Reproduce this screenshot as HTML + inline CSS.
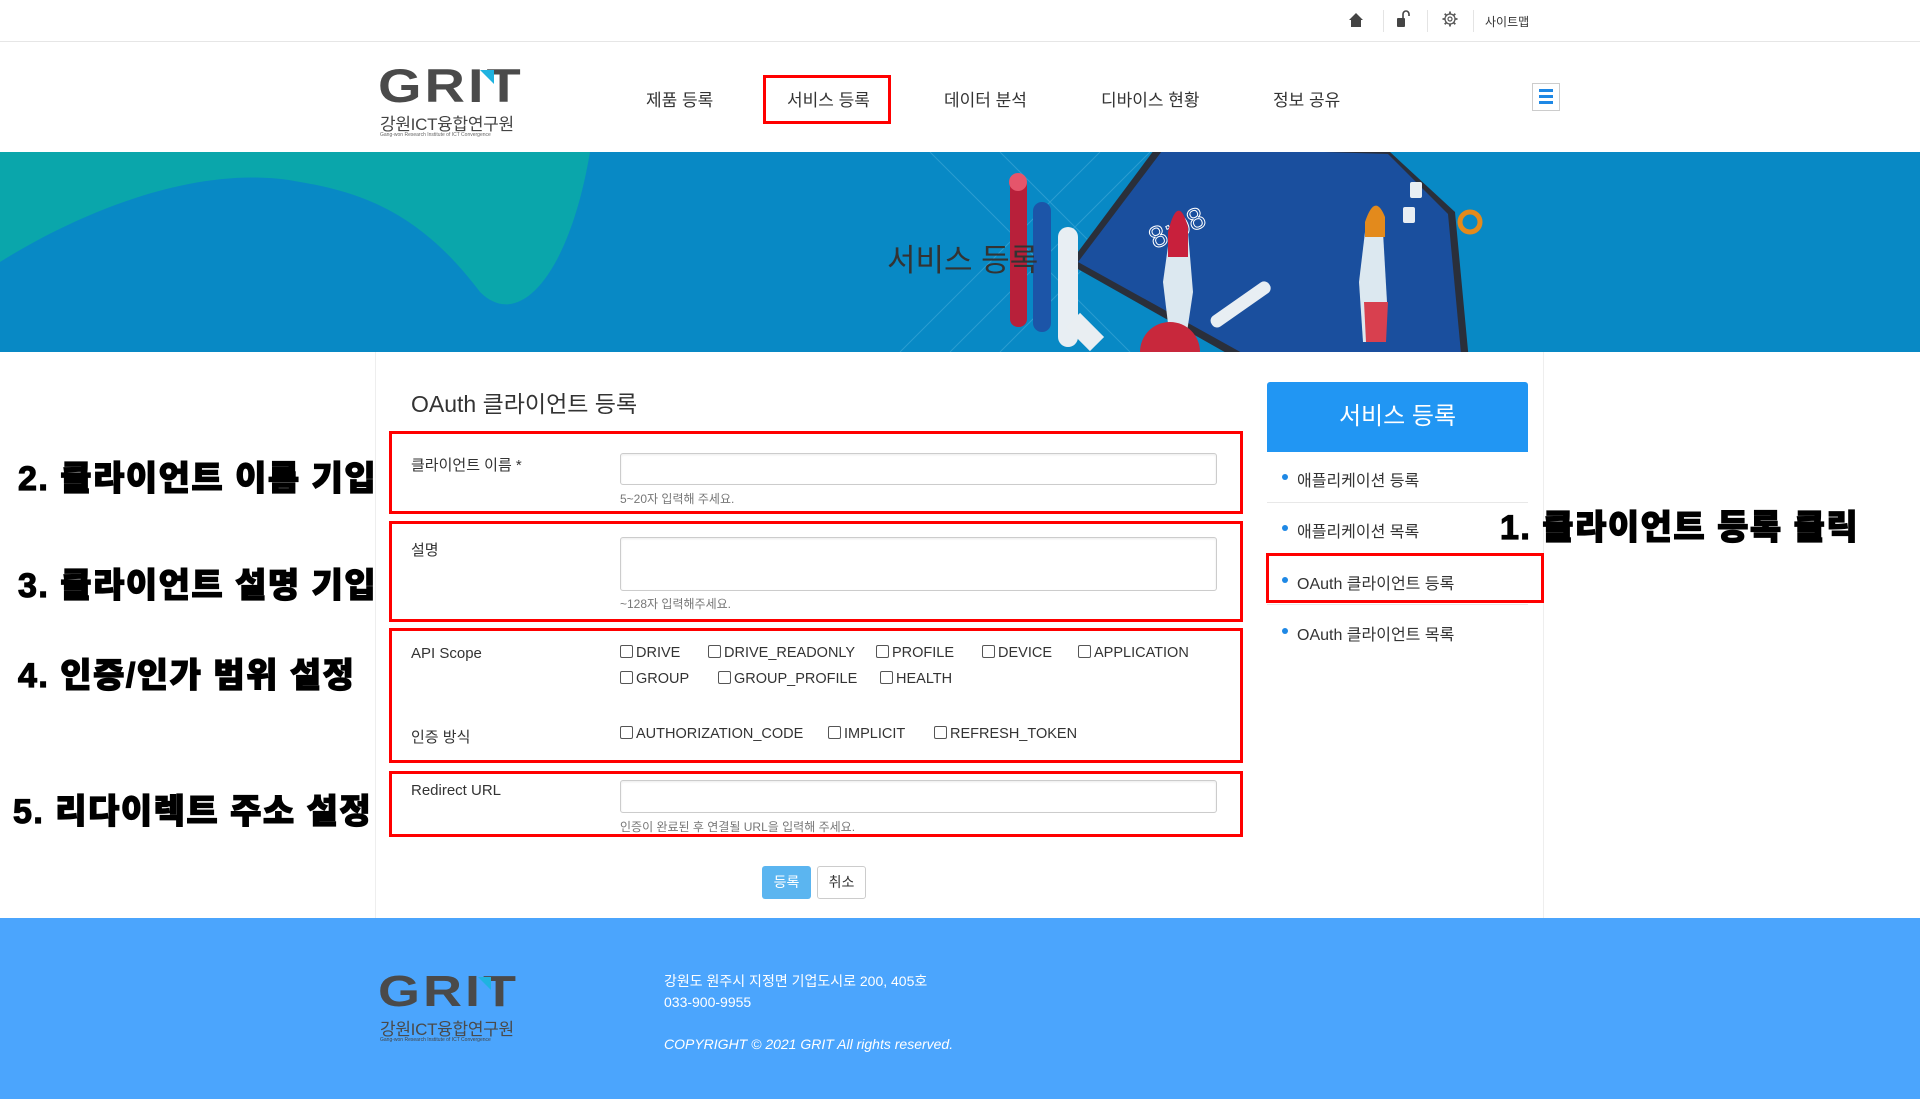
<!DOCTYPE html>
<html><head><meta charset="utf-8">
<style>
*{margin:0;padding:0;box-sizing:border-box}
body{width:1920px;height:1099px;overflow:hidden;background:#fff;font-family:"Liberation Sans","Noto Sans CJK KR",sans-serif;color:#333;position:relative}
.a{position:absolute}
.topbar{left:0;top:0;width:1920px;height:42px;border-bottom:1px solid #e6e6e6}
.nav{font-size:17px;color:#333;top:86px}
.lbl{font-size:15px;color:#333;left:411px}
.inp{left:620px;width:597px;border:1px solid #ccc;border-radius:3px;background:#fff;box-shadow:inset 0 1px 2px rgba(0,0,0,.08)}
.hint{font-size:12px;color:#777;left:620px}
.cb{font-size:14.5px;color:#333;white-space:nowrap}
.cb:before{content:"";display:inline-block;width:11px;height:11px;border:1px solid #555;border-radius:2px;margin-right:3px;vertical-align:-1px}
.red{border:3px solid #f00}
.ann{font-size:34px;font-weight:900;color:#000;letter-spacing:1.5px;white-space:nowrap;-webkit-text-stroke:1.2px #000}
.side{font-size:16px;color:#333;left:1297px}
.dot{width:6px;height:6px;border-radius:50%;background:#1e88e5;left:1282px}
.sep{left:1267px;width:261px;height:1px;background:#e8e8e8}
</style></head><body>
<div class="a topbar"></div>
<svg class="a" style="left:1348px;top:12px" width="16" height="16" viewBox="0 0 16 16"><path d="M8 1 L15 8 H13 V15 H3 V8 H1 Z" fill="#444"/></svg>
<div class="a" style="left:1383px;top:10px;width:1px;height:22px;background:#e4e4e4"></div>
<svg class="a" style="left:1395px;top:10px" width="16" height="18" viewBox="0 0 16 18"><rect x="2" y="8" width="8" height="9" rx="1" fill="#444"/><path d="M8 8 V4 a3 3 0 0 1 6 0 V6" stroke="#444" stroke-width="1.6" fill="none"/></svg>
<div class="a" style="left:1427px;top:10px;width:1px;height:22px;background:#e4e4e4"></div>
<svg class="a" style="left:1442px;top:11px" width="16" height="16" viewBox="0 0 16 16"><circle cx="8" cy="8" r="5" fill="none" stroke="#555" stroke-width="1.3"/><circle cx="8" cy="8" r="2" fill="none" stroke="#555" stroke-width="1.2"/><g stroke="#555" stroke-width="1.8"><path d="M8 0.5V3M8 13V15.5M0.5 8H3M13 8H15.5M2.7 2.7L4.5 4.5M11.5 11.5L13.3 13.3M2.7 13.3L4.5 11.5M11.5 4.5L13.3 2.7"/></g></svg>
<div class="a" style="left:1473px;top:10px;width:1px;height:22px;background:#e4e4e4"></div>
<div class="a" style="left:1485px;top:13px;font-size:12px;color:#333">사이트맵</div>

<!-- logo -->
<div class="a" style="left:378px;top:62px;font-size:56px;font-weight:900;color:#4a4a4a;letter-spacing:3px;line-height:56px;transform:scaleY(0.85);transform-origin:top left">GRIT</div>
<div class="a" style="left:480px;top:70px;width:14px;height:14px;background:#1fb3e0;clip-path:polygon(0 0,100% 0,100% 100%)"></div>
<div class="a" style="left:380px;top:110px;font-size:17px;color:#444;letter-spacing:-0.3px">강원ICT융합연구원</div>
<div class="a" style="left:380px;top:132px;font-size:5px;color:#666">Gang-won Research Institute of ICT Convergence</div>

<div class="a nav" style="left:646px">제품 등록</div>
<div class="a nav" style="left:787px">서비스 등록</div>
<div class="a red" style="left:763px;top:75px;width:128px;height:49px"></div>
<div class="a nav" style="left:944px">데이터 분석</div>
<div class="a nav" style="left:1101px">디바이스 현황</div>
<div class="a nav" style="left:1273px">정보 공유</div>
<div class="a" style="left:1532px;top:83px;width:28px;height:28px;border:1px solid #ccc"></div>
<div class="a" style="left:1539px;top:89px;width:14px;height:3px;background:#1e88e5;box-shadow:0 6px 0 #1e88e5,0 12px 0 #1e88e5"></div>

<!-- banner -->
<svg class="a" style="left:0;top:152px" width="1920" height="200" viewBox="0 0 1920 200">
<rect width="1920" height="200" fill="#0889c5"/>
<path d="M0 0 H590 C570 120 520 180 480 140 C420 60 360 40 300 30 C200 10 80 60 0 110 Z" fill="#0aa6ab"/>
<g stroke="#4fb0dc" stroke-width="1" opacity="0.5"><path d="M950 200 L1150 0 M1000 200 L1200 0 M900 200 L1100 0 M1130 200 L930 0 M1200 200 L1000 0"/></g>
<polygon points="1160,-10 1069,112 1260,220 1470,220 1455,60 1390,0" fill="#2a2f3a"/>
<polygon points="1165,-5 1078,110 1262,212 1462,212 1448,62 1388,2" fill="#1a4f9e"/>
<rect x="1010" y="25" width="17" height="150" rx="8" fill="#b8203a"/>
<circle cx="1018" cy="30" r="9" fill="#e5556b"/>
<rect x="1033" y="50" width="18" height="130" rx="9" fill="#1c55a8"/>
<rect x="1058" y="75" width="20" height="120" rx="10" fill="#e8eef3"/>
<rect x="1238" y="120" width="13" height="70" rx="6" fill="#e8eef3" transform="rotate(55 1245 150)"/>
<text x="1150" y="85" font-size="30" fill="none" stroke="#fff" font-family="Liberation Sans" transform="rotate(-25 1180 80)">8:08</text>
<path d="M1170 80 q8 -25 18 0 l5 60 l-6 40 h-18 l-6 -50z" fill="#dce8f0"/><path d="M1168 80 q10 -40 20 -5 v30 h-20z" fill="#c8203c"/>
<path d="M1365 80 q8 -25 18 0 l4 70 l-4 40 h-20 l-4 -60z" fill="#dce8f0"/><path d="M1365 70 q10 -30 20 -5 v20 h-20z" fill="#e38a1c"/>
<path d="M1364 150 h24 l-2 40 h-20z" fill="#d8404f"/>
<rect x="1068" y="170" width="34" height="20" fill="#e9eef2" transform="rotate(45 1085 180)"/>
<path d="M1140 200 a30 30 0 0 1 60 0" fill="#c8283c"/>
<rect x="1410" y="30" width="12" height="16" rx="2" fill="#e8eef3"/>
<rect x="1403" y="55" width="12" height="16" rx="2" fill="#e8eef3"/>
<circle cx="1470" cy="70" r="10" fill="none" stroke="#e38a1c" stroke-width="5"/>
</svg>
<div class="a" style="left:887px;top:235px;font-size:31px;color:#333">서비스 등록</div>

<div class="a" style="left:375px;top:352px;width:1px;height:566px;background:#eee"></div>
<div class="a" style="left:1543px;top:352px;width:1px;height:566px;background:#eee"></div>

<div class="a" style="left:411px;top:385px;font-size:23px;color:#333">OAuth 클라이언트 등록</div>

<div class="a lbl" style="top:454px">클라이언트 이름 *</div>
<div class="a inp" style="top:453px;height:32px"></div>
<div class="a hint" style="top:490px">5~20자 입력해 주세요.</div>
<div class="a red" style="left:389px;top:431px;width:854px;height:83px"></div>

<div class="a lbl" style="top:539px">설명</div>
<div class="a inp" style="top:537px;height:54px"></div>
<div class="a hint" style="top:595px">~128자 입력해주세요.</div>
<div class="a red" style="left:389px;top:521px;width:854px;height:101px"></div>

<div class="a lbl" style="top:645px">API Scope</div>
<div class="a cb" style="left:620px;top:645px">DRIVE</div>
<div class="a cb" style="left:708px;top:645px">DRIVE_READONLY</div>
<div class="a cb" style="left:876px;top:645px">PROFILE</div>
<div class="a cb" style="left:982px;top:645px">DEVICE</div>
<div class="a cb" style="left:1078px;top:645px">APPLICATION</div>
<div class="a cb" style="left:620px;top:671px">GROUP</div>
<div class="a cb" style="left:718px;top:671px">GROUP_PROFILE</div>
<div class="a cb" style="left:880px;top:671px">HEALTH</div>
<div class="a lbl" style="top:726px">인증 방식</div>
<div class="a cb" style="left:620px;top:726px">AUTHORIZATION_CODE</div>
<div class="a cb" style="left:828px;top:726px">IMPLICIT</div>
<div class="a cb" style="left:934px;top:726px">REFRESH_TOKEN</div>
<div class="a red" style="left:389px;top:628px;width:854px;height:135px"></div>

<div class="a lbl" style="top:782px">Redirect URL</div>
<div class="a inp" style="top:780px;height:33px"></div>
<div class="a hint" style="top:818px">인증이 완료된 후 연결될 URL을 입력해 주세요.</div>
<div class="a red" style="left:389px;top:771px;width:854px;height:66px"></div>

<div class="a" style="left:762px;top:866px;width:49px;height:33px;background:#5bb5f0;border-radius:3px;color:#fff;font-size:14px;text-align:center;line-height:33px">등록</div>
<div class="a" style="left:817px;top:866px;width:49px;height:33px;border:1px solid #ccc;border-radius:3px;color:#333;font-size:14px;text-align:center;line-height:31px">취소</div>

<div class="a ann" style="left:18px;top:451px">2. 클라이언트 이름 기입</div>
<div class="a ann" style="left:18px;top:558px">3. 클라이언트 설명 기입</div>
<div class="a ann" style="left:18px;top:648px">4. 인증/인가 범위 설정</div>
<div class="a ann" style="left:13px;top:784px">5. 리다이렉트 주소 설정</div>
<div class="a ann" style="left:1500px;top:500px">1. 클라이언트 등록 클릭</div>

<div class="a" style="left:1267px;top:382px;width:261px;height:70px;background:#2196f3;border-radius:3px 3px 0 0;color:#fff;font-size:24px;text-align:center;line-height:70px">서비스 등록</div>
<div class="a dot" style="top:474px"></div><div class="a side" style="top:467px">애플리케이션 등록</div>
<div class="a sep" style="top:502px"></div>
<div class="a dot" style="top:525px"></div><div class="a side" style="top:518px">애플리케이션 목록</div>
<div class="a sep" style="top:553px"></div>
<div class="a dot" style="top:577px"></div><div class="a side" style="top:570px">OAuth 클라이언트 등록</div>
<div class="a sep" style="top:604px"></div>
<div class="a dot" style="top:628px"></div><div class="a side" style="top:621px">OAuth 클라이언트 목록</div>
<div class="a red" style="left:1266px;top:553px;width:278px;height:50px"></div>

<div class="a" style="left:0;top:918px;width:1920px;height:181px;background:#4ba5fd"></div>
<div class="a" style="left:378px;top:970px;font-size:54px;font-weight:900;color:#4a4a4a;letter-spacing:3px;line-height:54px;transform:scaleY(0.8);transform-origin:top left">GRIT</div>
<div class="a" style="left:478px;top:977px;width:13px;height:13px;background:#1fb3e0;clip-path:polygon(0 0,100% 0,100% 100%)"></div>
<div class="a" style="left:380px;top:1015px;font-size:17px;color:#4a4a4a;letter-spacing:-0.3px">강원ICT융합연구원</div>
<div class="a" style="left:380px;top:1037px;font-size:5px;color:#444">Gang-won Research Institute of ICT Convergence</div>
<div class="a" style="left:664px;top:971px;font-size:14px;color:#fff;line-height:21px">강원도 원주시 지정면 기업도시로 200, 405호<br>033-900-9955</div>
<div class="a" style="left:664px;top:1036px;font-size:14px;color:#fff;font-style:italic">COPYRIGHT © 2021 GRIT All rights reserved.</div>
</body></html>
